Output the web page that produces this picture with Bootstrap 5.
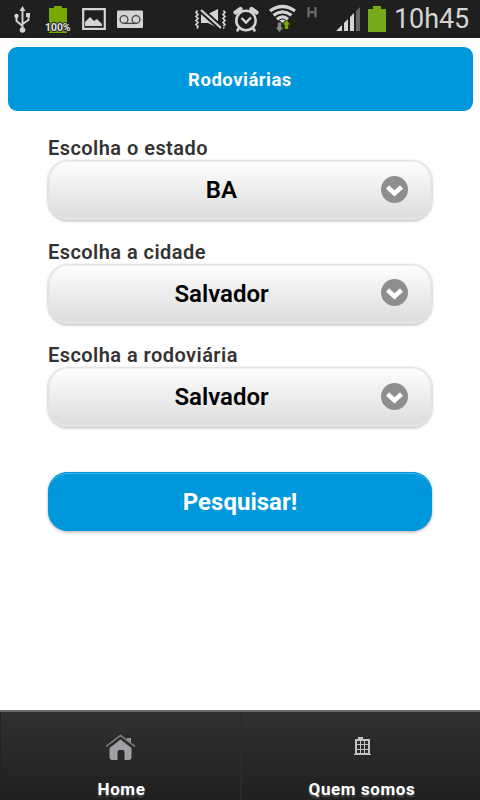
<!DOCTYPE html>
<html lang="pt-BR">
<head>
<meta charset="utf-8">
<meta name="viewport" content="width=device-width, initial-scale=1">
<title>Rodoviárias</title>
<link href="https://cdn.jsdelivr.net/npm/bootstrap@5.3.0/dist/css/bootstrap.min.css" rel="stylesheet">
<style>
body{font-family:Roboto,"Liberation Sans",sans-serif;height:800px;overflow:hidden;background:#fff}
.status-bar{height:38px;background:#1f1f1f;color:#d4d4d4}
.status-bar svg{display:block;flex:none}
.clock{font-size:27px;line-height:38px;width:91px;padding-left:5px;letter-spacing:-.1px;white-space:nowrap}
.title-bar{height:64px;margin:9px 7.5px 0;padding-top:2px;border-radius:9px;background:#0098dc;color:#fff;font-size:18.5px;font-weight:700;letter-spacing:.5px}
.search-form{padding:24px 48px 0}
.field-label{display:block;font-size:20px;line-height:25px;padding-top:1px;height:25px;font-weight:600;letter-spacing:.45px;color:#333;white-space:nowrap}
.picker,.picker:hover{height:60px;margin-bottom:18.5px;border:0;border-radius:20px;background:linear-gradient(#fefefe,#dcdcdc);box-shadow:inset 0 0 0 1.5px #e3e3e3,inset 0 -3px 0 -1px #e9e9e9,0 1px 3px rgba(0,0,0,.3);color:#000;font-size:24px;font-weight:600;padding:0 24px 0 63px}
.picker span{line-height:30px}
.picker svg{margin-bottom:1px}
.submit-btn,.submit-btn:hover{height:59px;margin-top:26px;padding-top:8px;border:0;border-radius:20px;background:#0098dc;color:#fff;font-size:24px;font-weight:700;box-shadow:inset 0 1px 0 #0098dc,inset 0 3px 0 -1px #43b3e5,0 1px 3px rgba(0,0,0,.35)}
.tab-bar{height:90px;background:linear-gradient(#303030,#202020);border-top:2px solid #696969}
.tab-link{color:#fff;font-size:17px;font-weight:700;line-height:20px;text-shadow:0 2px 2px #555;letter-spacing:.6px;text-decoration:none;padding-left:2px}
.tab-link:hover{color:#fff}
.tab-link svg{margin:19px 2px 16px 0}
.tab-link.first{border-left:1px solid #222;width:242px;flex:none;border-right:2px solid #2b2b2b}
</style>
</head>
<body class="d-flex flex-column">
<header class="status-bar d-flex flex-shrink-0">
<svg width="38" height="38" viewBox="0 0 38 38" fill="#d4d4d4" stroke="#d4d4d4"><path d="M22.5 10v19M16.500 17v4l6 5M28.500 16v4l-6 4" fill="none" stroke-width="1.900"/><path d="M22.500 6l3 5h-6z" stroke="none"/><circle cx="16.500" cy="16" r="2.200" stroke="none"/><path d="M26 13h4v4h-4z" stroke="none"/><circle cx="22.500" cy="30" r="2.800" stroke="none"/></svg>
<svg width="38" height="38" viewBox="38 0 38 38"><path fill="#77a800" d="M49 8h5V6h8v2h5v25H49z"/><text x="45" y="31" textLength="25.500" lengthAdjust="spacingAndGlyphs" font-size="10.500" font-weight="700" fill="#e2e2e2" stroke="#202020" stroke-width="2" paint-order="stroke">100%</text></svg>
<svg width="76" height="38" viewBox="76 0 76 38"><path d="M83.200 9.200h21.600v19.600H83.200z" fill="none" stroke="#d4d4d4" stroke-width="2.200"/><path fill="#d4d4d4" d="M85 26v-4l5-5 4 4 3-2 5 5v2z"/><rect x="117" y="10.500" width="26" height="17.500" rx="1" fill="#d4d4d4"/><g fill="none" stroke="#444" stroke-width="1.300"><circle cx="124" cy="19.500" r="3.900"/><circle cx="136" cy="19.500" r="3.900"/><path d="M124 23.400h12"/></g></svg>
<svg class="ms-auto" width="38" height="38" viewBox="192 0 38 38" fill="none" stroke="#d4d4d4" stroke-width="1.700"><path d="M197.500 10.500l-1.500 2 2 2-2 2 2 2-2 2 2 2-2 2 2 2-1 2M223.500 10.500l1.500 2-2 2 2 2-2 2 2 2-2 2 2 2-2 2 1 2"/><path fill="#d4d4d4" stroke="none" d="M201 14h7l10-5v19l-10-5h-7z"/><path d="M201 10l21 19" stroke="#1f1f1f" stroke-width="6"/><path d="M201 10l20 18" stroke-width="2.200"/><path fill="#d4d4d4" stroke="none" d="M201 15l9 8h-9z"/></svg>
<svg width="34" height="38" viewBox="230 0 34 38" fill="none" stroke="#d4d4d4"><circle cx="246" cy="20.500" r="9.700" stroke-width="2.600"/><path d="M241.500 18l4.500 4.500 5-5" stroke-width="2.400"/><path d="M235.500 12.500l5-3.500M256.500 12.500l-5-3.500" stroke-width="4.200" stroke-linecap="round"/><path d="M239 28l-1.500 2.500M253 28l1.500 2.500" stroke-width="2.600" stroke-linecap="round"/></svg>
<svg width="58" height="38" viewBox="264 0 58 38"><g fill="none" stroke="#d4d4d4" stroke-width="3.200"><path d="M270 11Q282.500 2 295 11M273.500 15.200Q282.500 8.500 291.500 15.200M277 19.200Q282.500 14.500 288 19.200"/></g><path fill="#d4d4d4" d="M279.500 20.500q3-2 6 0l-3 2.500z"/><path fill="#888" d="M277.800 22.500h3.400v5h2l-3.700 4.500-3.700-4.500h2z"/><path fill="#77a800" d="M286.500 20l3.700 4.500h-2v4.500h-3.400v-4.500h-2z"/><path d="M308.500 7v10.500M315.500 7v10.500M308.500 12.200h7" stroke="#656565" stroke-width="2.400"/></svg>
<svg width="67" height="38" viewBox="322 0 67 38"><path fill="#d4d4d4" d="M336 31l6-6v6zM344 31v-8l4-4v12zM350 31V17l4-4v18z"/><path fill="#656565" d="M356 31V11l4-4v24z"/><path fill="#77aa19" d="M368 9h5V6h8v3h5v23h-18z"/></svg>
<div class="clock">10h45</div>
</header>
<h1 class="title-bar d-flex align-items-center justify-content-center flex-shrink-0">Rodoviárias</h1>
<main class="search-form flex-grow-1">
<label class="field-label" for="state">Escolha o estado</label>
<button id="state" type="button" class="picker btn w-100 d-flex align-items-center"><span class="flex-grow-1 text-center pe-5">BA</span><svg width="28" height="28" viewBox="0 0 28 28"><circle cx="14.500" cy="13.500" r="13.500" fill="#8e8e8e"/><path d="M7.500 11l7 6.500 7-6.500" fill="none" stroke="#fff" stroke-width="4.500"/></svg></button>
<label class="field-label" for="city">Escolha a cidade</label>
<button id="city" type="button" class="picker btn w-100 d-flex align-items-center"><span class="flex-grow-1 text-center pe-5">Salvador</span><svg width="28" height="28" viewBox="0 0 28 28"><circle cx="14.500" cy="13.500" r="13.500" fill="#8e8e8e"/><path d="M7.500 11l7 6.500 7-6.500" fill="none" stroke="#fff" stroke-width="4.500"/></svg></button>
<label class="field-label" for="station">Escolha a rodoviária</label>
<button id="station" type="button" class="picker btn w-100 d-flex align-items-center"><span class="flex-grow-1 text-center pe-5">Salvador</span><svg width="28" height="28" viewBox="0 0 28 28"><circle cx="14.500" cy="13.500" r="13.500" fill="#8e8e8e"/><path d="M7.500 11l7 6.500 7-6.500" fill="none" stroke="#fff" stroke-width="4.500"/></svg></button>
<button type="button" class="submit-btn btn w-100">Pesquisar!</button>
</main>
<nav class="tab-bar d-flex flex-shrink-0">
<a href="#" class="tab-link first d-flex flex-column align-items-center"><svg width="34" height="32" viewBox="104 731 34 32"><path d="M106 746.500l14.500-11 14.500 11" fill="none" stroke="#858585" stroke-width="1.500"/><path fill="#929292" d="M127 738h4v5l-4-3z"/><path fill="#a0a1a4" d="M109.500 748l11-8.500 11 8.500v9q0 3-3 3h-4v-8q0-2-2-2h-3q-2 0-2 2v8h-5q-3 0-3-3z"/></svg><span>Home</span></a>
<a href="#" class="tab-link flex-grow-1 d-flex flex-column align-items-center"><svg width="34" height="32" viewBox="345 731 34 32"><path fill="#c4c4c4" fill-rule="evenodd" d="M356 739h3v-2h5v2h7v15h1v1h-17v-1h1zM358 741v3h3v-3zM362 741v3h3v-3zM366 741v3h3v-3zM358 745v4h3v-4zM362 745v4h3v-4zM366 745v4h3v-4zM358 750v3h3v-3zM362 750v3h3v-3zM366 750v3h3v-3z"/></svg><span>Quem somos</span></a>
</nav>
<script src="https://cdn.jsdelivr.net/npm/bootstrap@5.3.0/dist/js/bootstrap.bundle.min.js"></script>
</body>
</html>
